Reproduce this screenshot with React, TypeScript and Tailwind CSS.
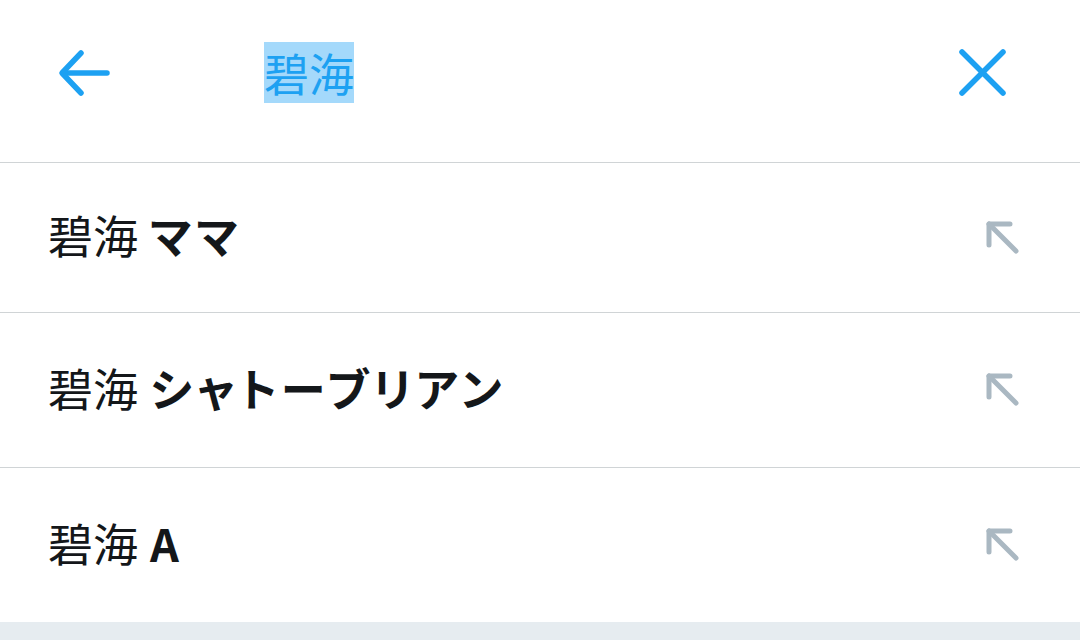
import React from "react"

const rows = [
  { rest: "ママ", h: "h-[150px]" },
  { rest: "シャトーブリアン", h: "h-[155px]" },
  { rest: "A", h: "h-[155px]" },
]

function BackArrow() {
  return (
    <svg width="56" height="56" viewBox="0 0 56 56" fill="none" stroke="#1da1f2" strokeWidth="5.5" strokeLinecap="round" strokeLinejoin="round">
      <path d="M7 28H51" />
      <path d="M25 8L6 28L25 48" />
    </svg>
  )
}

function CloseIcon() {
  return (
    <svg width="50" height="50" viewBox="0 0 50 50" fill="none" stroke="#1da1f2" strokeWidth="5.5" strokeLinecap="round">
      <path d="M4 4L45 45" />
      <path d="M45 4L4 45" />
    </svg>
  )
}

function FillArrow() {
  return (
    <svg width="36" height="36" viewBox="0 0 36 36" fill="none" stroke="#aab8c2" strokeWidth="5" strokeLinecap="round" strokeLinejoin="round">
      <path d="M5 26V5H26" />
      <path d="M5 5L32 32" />
    </svg>
  )
}

export default function App() {
  return (
    <div className="w-[1080px] h-[640px] bg-[#e6ecf0] flex flex-col font-['Noto_Sans_CJK_JP','Noto_Sans',sans-serif] text-[#14171a] overflow-hidden">
      <header className="h-[162px] bg-white flex items-center">
        <div className="ml-[56px] w-[56px] h-[56px] -mt-[16px]">
          <BackArrow />
        </div>
        <div className="ml-[152px] -mt-[18px] bg-[#a4d9fb] text-[#1da1f2] text-[45px] leading-[61px]">
          碧海
        </div>
        <div className="ml-auto mr-[72px] -mt-[16px]">
          <CloseIcon />
        </div>
      </header>
      {rows.map((r, i) => (
        <div key={i} className={`${r.h} bg-white border-t border-[#d0d4d6] flex items-center pl-[48px] pr-[60px]`}>
          <span className="text-[45px] [font-feature-settings:'palt'] leading-none -mt-[6px]">
            碧海 <span className="font-semibold tracking-[4.5px] ml-[2px]">{r.rest}</span>
          </span>
          <div className="ml-auto -mt-[2px]">
            <FillArrow />
          </div>
        </div>
      ))}
    </div>
  )
}
